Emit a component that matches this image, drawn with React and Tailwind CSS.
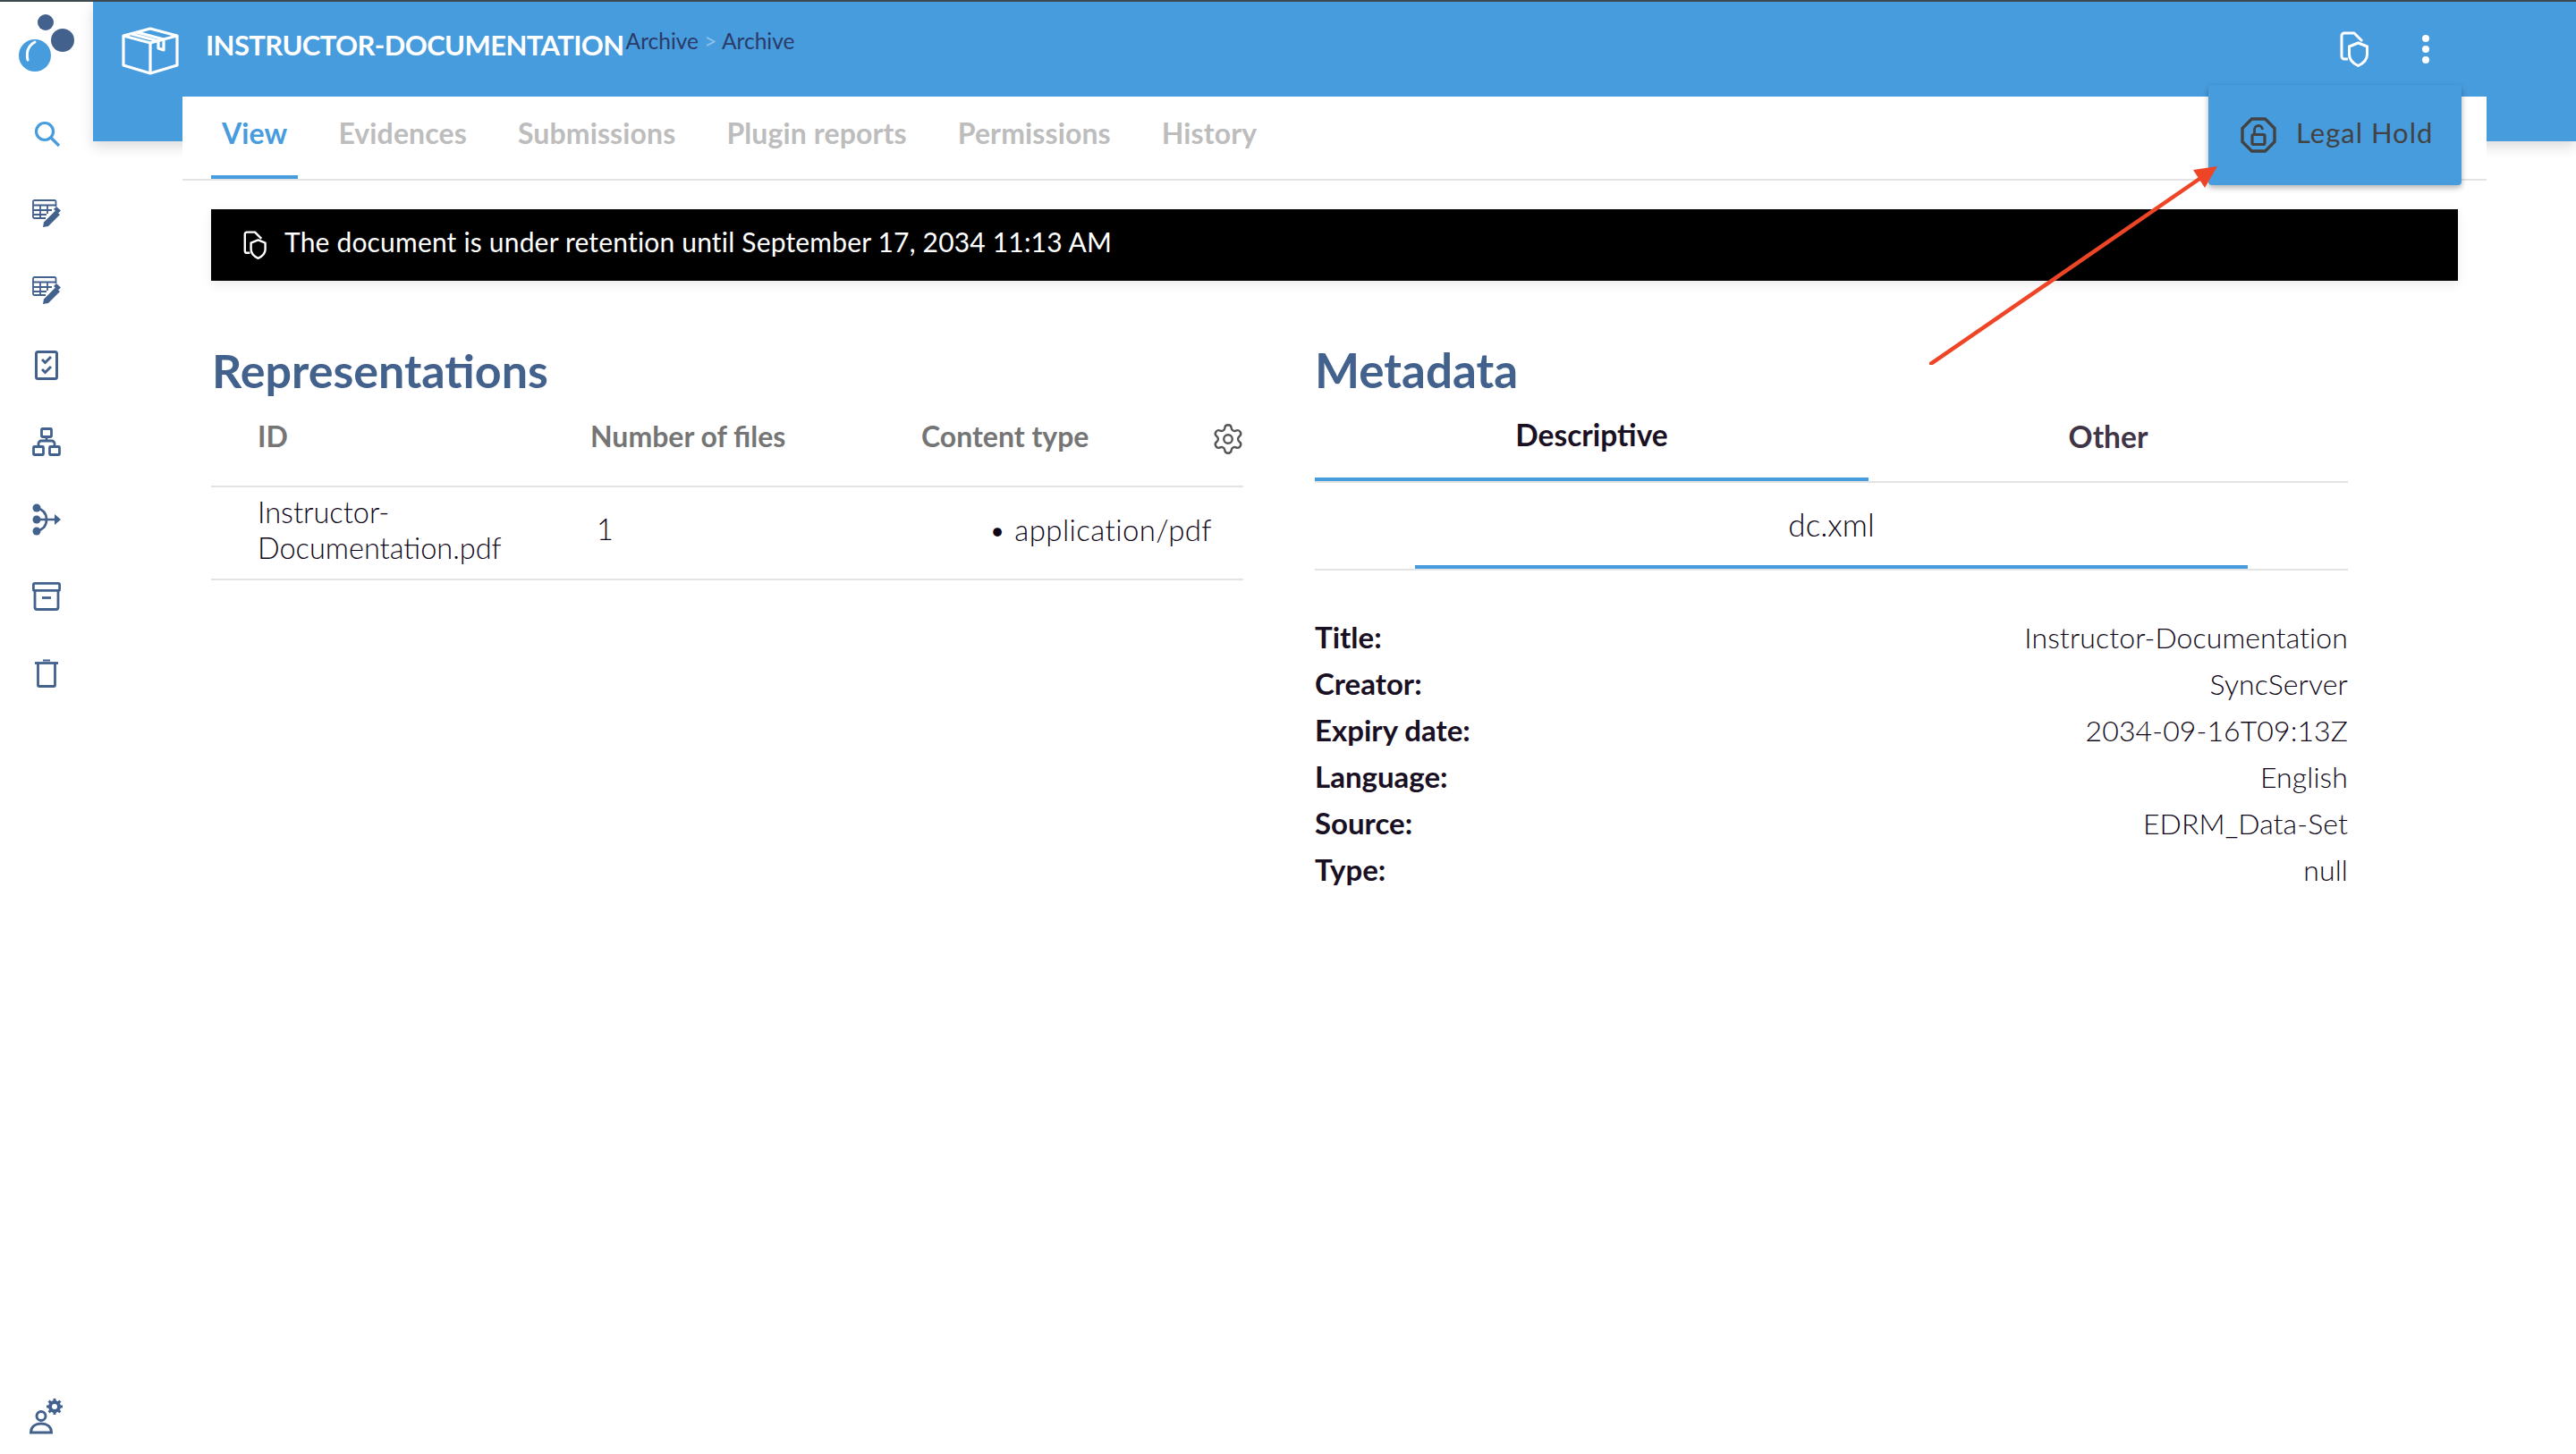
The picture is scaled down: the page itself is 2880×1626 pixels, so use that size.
import React from 'react';
import { Settings } from 'lucide-react';

const tabs = ['View', 'Evidences', 'Submissions', 'Plugin reports', 'Permissions', 'History'];

const metadata = [
  ['Title:', 'Instructor-Documentation'],
  ['Creator:', 'SyncServer'],
  ['Expiry date:', '2034-09-16T09:13Z'],
  ['Language:', 'English'],
  ['Source:', 'EDRM_Data-Set'],
  ['Type:', 'null'],
];

const Logo = () => (
  <svg width="66" height="66" viewBox="0 0 66 66">
    <circle cx="31" cy="9" r="9" fill="#43618d" />
    <circle cx="50" cy="29" r="13" fill="#43618d" />
    <circle cx="19" cy="46" r="18" fill="#479cde" />
    <path d="M11 51 C9 42 12 35 19 31" fill="none" stroke="#fff" strokeWidth="3" strokeLinecap="round" />
  </svg>
);

const SearchIcon = () => (
  <svg width="30" height="30" viewBox="0 0 30 30" fill="none" stroke="#479cde" strokeWidth="3.2">
    <circle cx="12" cy="12" r="9.5" />
    <path d="M19 19 L28 28" />
  </svg>
);

const TableEdit = () => (
  <svg width="32" height="32" viewBox="0 0 32 32" fill="none" stroke="#43618d" strokeWidth="1.8">
    <path d="M15 21 H2.5 a1.5 1.5 0 0 1-1.5-1.5 V2.5 A1.5 1.5 0 0 1 2.5 1 H25 a1.5 1.5 0 0 1 1.5 1.5 V8" />
    <path d="M1 6.5 H26 M1 12 H22 M1 17 H16 M9 6.5 V21 M17 6.5 V16" />
    <path d="M12 31 L13 25.5 L26 12.5 L31 17 L18 30 Z" fill="#43618d" stroke="none" />
    <path d="M24 11 L27 8 L32 12.5 L29 15.5 Z" fill="#43618d" stroke="none" />
  </svg>
);

const Checklist = () => (
  <svg width="26" height="33" viewBox="0 0 26 33" fill="none" stroke="#43618d">
    <rect x="1.5" y="1.5" width="23" height="30" rx="2" strokeWidth="3" />
    <path d="M8 10 L11.5 13.5 L18 7 M8 21 L11.5 24.5 L18 18" strokeWidth="3" />
  </svg>
);

const Hierarchy = () => (
  <svg width="32" height="32" viewBox="0 0 32 32" fill="none" stroke="#43618d" strokeWidth="2.8">
    <rect x="10.5" y="1.5" width="11" height="9" rx="1" />
    <rect x="1.5" y="21.5" width="11" height="9" rx="1" />
    <rect x="19.5" y="21.5" width="11" height="9" rx="1" />
    <path d="M16 10 V15 M7 21 V18 a3 3 0 0 1 3-3 H22 a3 3 0 0 1 3 3 V21" />
  </svg>
);

const MergeArrow = () => (
  <svg width="32" height="36" viewBox="0 0 32 36" fill="none" stroke="#43618d" strokeWidth="2.6">
    <circle cx="5" cy="5" r="4.5" fill="#43618d" stroke="none" />
    <circle cx="5" cy="18" r="4.5" fill="#43618d" stroke="none" />
    <circle cx="5" cy="31" r="4.5" fill="#43618d" stroke="none" />
    <path d="M5 5 C13 7 16 12 16 18 C16 24 13 29 5 31 M5 18 H26" />
    <path d="M25 12 L32 18 L25 24 Z" fill="#43618d" stroke="none" />
  </svg>
);

const ArchiveBox = () => (
  <svg width="32" height="32" viewBox="0 0 32 32" fill="none" stroke="#43618d" strokeWidth="2.8">
    <rect x="1.4" y="1.4" width="29.2" height="8" rx="1.5" />
    <path d="M3 9 V28 a2.5 2.5 0 0 0 2.5 2.5 H26.5 a2.5 2.5 0 0 0 2.5-2.5 V9" />
    <path d="M11 17.5 H21" />
  </svg>
);

const Trash = () => (
  <svg width="26" height="32" viewBox="0 0 26 32" fill="none" stroke="#43618d" strokeWidth="2.8">
    <path d="M0 4.5 H26" />
    <path d="M9 1.5 H17" strokeWidth="2" />
    <path d="M3.5 5 V29 a1.5 1.5 0 0 0 1.5 1.5 H21 a1.5 1.5 0 0 0 1.5-1.5 V5" />
  </svg>
);

const UserCog = () => (
  <svg width="38" height="40" viewBox="0 0 38 40" fill="none" stroke="#43618d">
    <circle cx="13" cy="19.5" r="5" strokeWidth="3" />
    <path d="M1.5 38 C1.5 31 7 28 13 28 C19 28 24.5 31 24.5 38 Z" strokeWidth="3" />
    <circle cx="28" cy="9" r="5" strokeWidth="4" />
    <path d="M28 0 V3 M28 15 V18 M19 9 H22 M34 9 H37 M21.6 2.6 L24 5 M32 13 L34.4 15.4 M34.4 2.6 L32 5 M24 13 L21.6 15.4" strokeWidth="3" />
  </svg>
);

const PackageBox = () => (
  <svg width="64" height="54" viewBox="0 0 64 54" fill="none" stroke="#fff" strokeWidth="3.2" strokeLinejoin="round">
    <path d="M32 2 L62 10 V43 L32 52 L2 43 V10 Z" />
    <path d="M2 10 L32 18 L62 10 M32 18 V52" />
    <path d="M17 6 L47 14 V26 L41 24 V16 L11 8" />
  </svg>
);

const DocShield = ({ className }) => (
  <svg className={className} viewBox="0 0 32 40" fill="none" stroke="#fff" strokeWidth="3" strokeLinejoin="round">
    <path d="M9 31 H5 a3 3 0 0 1-3-3 V5 a3 3 0 0 1 3-3 H16 L25 11" />
    <path d="M20.5 13 L30.5 17 V26 C30.5 32 26 36 20.5 38.5 C15 36 10.5 32 10.5 26 V17 Z" />
  </svg>
);

const LockOctagon = () => (
  <svg width="40" height="40" viewBox="0 0 40 40" fill="none" stroke="#424242">
    <path d="M12.5 2 H27.5 L38 12.5 V27.5 L27.5 38 H12.5 L2 27.5 V12.5 Z" strokeWidth="3.4" />
    <rect x="13" y="19.5" width="14" height="11" rx="1.5" strokeWidth="3.2" />
    <path d="M15.5 19 V14 a4.5 4.5 0 0 1 9 0" strokeWidth="2.8" />
  </svg>
);

const App = () => {
  return (
    <div className="relative flex h-[1626px] w-full overflow-hidden border-t-2 border-[#3d4a50] bg-white font-[Lato,sans-serif] text-[#1a1024]">
      {/* Sidebar */}
      <aside className="flex w-[104px] shrink-0 flex-col items-center pb-[22px]">
        <div className="flex h-[105px] w-full items-start justify-start pl-[20px] pt-[14px]">
          <Logo />
        </div>
        <div className="flex h-[86px] items-center pl-[2px]"><SearchIcon /></div>
        <div className="flex h-[86px] items-center pt-[6px]"><TableEdit /></div>
        <div className="flex h-[86px] items-center pt-[6px]"><TableEdit /></div>
        <div className="flex h-[86px] items-center"><Checklist /></div>
        <div className="flex h-[86px] items-center"><Hierarchy /></div>
        <div className="flex h-[86px] items-center pt-[2px]"><MergeArrow /></div>
        <div className="flex h-[86px] items-center pt-[2px]"><ArchiveBox /></div>
        <div className="flex h-[86px] items-center pt-[2px]"><Trash /></div>
        <div className="mt-auto"><UserCog /></div>
      </aside>

      <main className="flex min-w-0 flex-1 flex-col">
        {/* Header */}
        <header className="flex h-[156px] shrink-0 items-start justify-between bg-[#479cde] pl-[32px] pr-[164px] shadow-[0_6px_14px_rgba(0,0,0,0.14)]">
          <div className="flex items-start pt-[28px]">
            <PackageBox />
            <h1 className="ml-[30px] text-[31px] font-bold leading-[40px] tracking-[-0.6px] text-white">INSTRUCTOR-DOCUMENTATION</h1>
            <div className="ml-[2px] text-[24.5px] leading-[32px] text-[#2b3a67]">
              Archive <span className="text-[#8fc2ea]">&gt;</span> Archive
            </div>
          </div>
          <div className="flex items-center gap-[60px] pt-[33px]">
            <DocShield className="h-[40px] w-[32px]" />
            <div className="flex flex-col gap-[4px]">
              <span className="h-[8px] w-[8px] rounded-full bg-white" />
              <span className="h-[8px] w-[8px] rounded-full bg-white" />
              <span className="h-[8px] w-[8px] rounded-full bg-white" />
            </div>
          </div>
        </header>

        {/* Panel */}
        <section className="relative z-10 mx-[100px] -mt-[50px] flex-1 bg-white">
          <nav className="flex h-[94px] gap-[33px] border-b-2 border-[#e3e3e3] pl-[32px]">
            {tabs.map((tab, i) => (
              <div
                key={tab}
                className={
                  i === 0
                    ? 'flex h-[92px] items-center border-b-4 border-[#479cde] px-[12px] pb-[7px] text-[32px] font-bold tracking-[0.12px] text-[#479cde]'
                    : 'flex h-[92px] items-center border-b-4 border-transparent px-[12px] pb-[7px] text-[32px] font-bold tracking-[0.12px] text-[#bdbdbd]'
                }
              >
                {tab}
              </div>
            ))}
          </nav>

          <div className="mx-[32px] mt-[32px] flex h-[80px] items-center bg-black pl-[35px] text-[30px] text-white shadow-[0_4px_12px_rgba(0,0,0,0.08)]">
            <DocShield className="h-[32px] w-[28px]" />
            <span className="ml-[19px] pb-[7px] tracking-[0.18px]">The document is under retention until September 17, 2034 11:13 AM</span>
          </div>

          <div className="ml-[32px] mt-[70px] flex gap-[80px]">
            {/* Representations */}
            <div className="w-[1154px]">
              <h2 className="pl-[1px] text-[52px] font-bold leading-[60px] text-[#43618d]">Representations</h2>
              <div className="grid h-[101px] grid-cols-[372px_370px_1fr_auto] items-center border-b-2 border-[#e3e3e3] pb-[12px] pl-[52px] text-[32px] font-bold text-[#757575]">
                <div>ID</div>
                <div>Number of files</div>
                <div>Content type</div>
                <Settings size={38} strokeWidth={1.5} color="#555" className="-mr-[2px] mt-[6px]" />
              </div>
              <div className="grid h-[104px] grid-cols-[372px_7px_1fr] items-center border-b-2 border-[#e3e3e3] pb-[7px] pl-[52px] text-[32.5px] font-light text-[#0f0718]">
                <div className="leading-[40px]">Instructor-<br />Documentation.pdf</div>
                <div />
                <div className="flex items-center justify-between pr-[35px]">
                  <span>1</span>
                  <span className="text-[33px] tracking-[0.4px]">• application/pdf</span>
                </div>
              </div>
            </div>

            {/* Metadata */}
            <div className="w-[1155px]">
              <h2 className="text-[53px] font-bold leading-[60px] text-[#43618d]">Metadata</h2>
              <div className="grid h-[96px] grid-cols-[619px_1fr] border-b-2 border-[#e3e3e3] text-[33.5px] font-bold">
                <div className="flex h-[94px] items-center justify-center border-b-4 border-[#479cde] pb-[5px]">Descriptive</div>
                <div className="flex h-[94px] items-center justify-center pb-[5px] text-[#3f3547]">Other</div>
              </div>
              <div className="flex h-[98px] justify-center border-b-2 border-[#e3e3e3] text-[35px] font-light text-[#0f0718]">
                <div className="flex h-[96px] w-[931px] items-center justify-center border-b-4 border-[#479cde]">dc.xml</div>
              </div>
              <div className="mt-[50px] flex flex-col">
                {metadata.map(([label, value]) => (
                  <div key={label} className="flex h-[52px] items-center justify-between pb-[2px]">
                    <span className="text-[33px] font-bold">{label}</span>
                    <span className="text-[32px] font-light tracking-[0.1px] text-[#0f0718]">{value}</span>
                  </div>
                ))}
              </div>
            </div>
          </div>
        </section>
      </main>

      {/* Open menu */}
      <div className="absolute left-[2469px] top-[93px] z-20 flex h-[112px] w-[283px] items-center rounded-[4px] bg-[#479cde] pl-[36px] shadow-[0_3px_6px_rgba(0,0,0,0.3)]">
        <LockOctagon />
        <span className="ml-[22px] pb-[6px] text-[31px] tracking-[1px] text-[#424242]">Legal Hold</span>
      </div>

      {/* Annotation arrow */}
      <svg className="absolute left-[2157px] top-[184px] z-30" width="322" height="222" viewBox="0 0 322 222">
        <path d="M0 222 L302 14" stroke="#ee4526" strokeWidth="4.5" />
        <path d="M322 0 L295 4 L308 24 Z" fill="#ee4526" />
      </svg>
    </div>
  );
};

export default App;
